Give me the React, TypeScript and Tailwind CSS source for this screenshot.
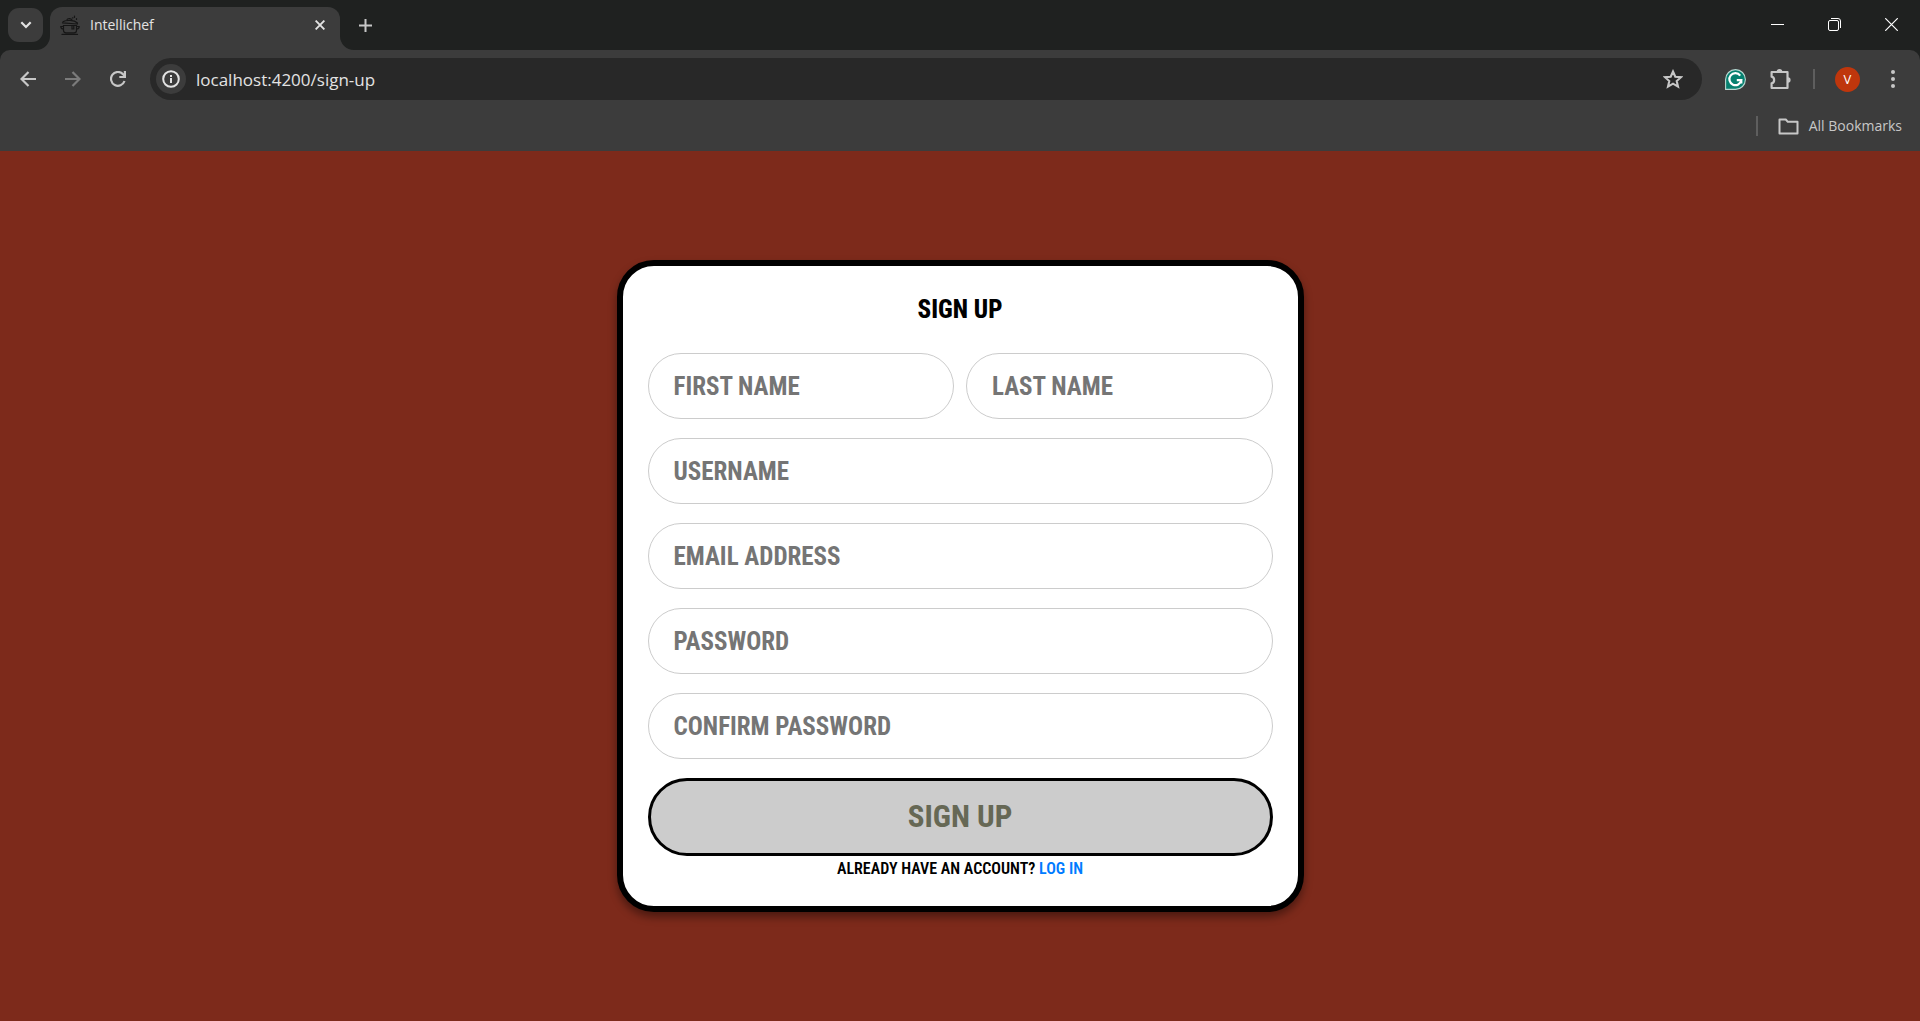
import type { ReactNode } from "react";

const uiFont = "font-['Open_Sans','Noto_Sans',sans-serif]";
const displayFont = "font-['Roboto_Condensed','Liberation_Sans_Narrow',sans-serif]";

function ToolButton({ label, children }: { label: string; children: ReactNode }) {
  return (
    <button type="button" aria-label={label} className="flex size-[35px] shrink-0 items-center justify-center rounded-full text-[#c7c7c7]">
      {children}
    </button>
  );
}

function WindowButton({ label, children }: { label: string; children: ReactNode }) {
  return (
    <button type="button" aria-label={label} className="flex h-[49px] w-[57px] items-center justify-center text-white">
      {children}
    </button>
  );
}

function PotIcon() {
  return (
    <svg viewBox="0 0 20 20" className="size-5 shrink-0" fill="none" stroke="#161616" strokeWidth="1.2" strokeLinecap="round" aria-hidden="true">
      <path d="M2.5 7.8 17.5 9M3 6.8C6 4.6 14 4.8 17.500 8M7 4.600c.5-1.600 5-1.400 5 .5" />
      <path d="M3.5 10.500h13v5c0 1.600-1 2.400-2.400 2.400H6c-1.500 0-2.500-.8-2.500-2.400zM3.500 11.500H.8c0 1.800 1 2.500 2.600 2.500M16.500 11.500h2.700c0 1.800-1 2.500-2.600 2.500M2 19.400h15.500" />
      <path d="M12 10.500v3.500h1.800v-3.500M14.500 1v1.500M16.500 3.500v1M12.500 2.800h.5" />
    </svg>
  );
}

function TabStrip() {
  return (
    <div className="flex h-[50px] items-start bg-[#1f2120]">
      <button type="button" aria-label="Search tabs" className="mt-2 ml-2 flex h-[34px] w-[35px] shrink-0 items-center justify-center rounded-[11px] bg-[#3c3c3c] text-[#e3e3e3]">
        <svg viewBox="0 0 12 8" className="h-2 w-3" fill="none" stroke="currentColor" strokeWidth="2.2" aria-hidden="true">
          <path d="M1.3 1.3 6 6l4.7-4.7" />
        </svg>
      </button>
      <div className="relative mt-[7px] ml-[7px] flex h-[43px] w-[290px] items-center rounded-t-xl bg-[#3c3c3c] pr-[10px] pb-[7px] pl-[10px]">
        <svg viewBox="0 0 14 14" className="absolute bottom-0 -left-[14px] size-[14px]" aria-hidden="true">
          <path d="M14 0v14H0A14 14 0 0 0 14 0z" fill="#3c3c3c" />
        </svg>
        <svg viewBox="0 0 14 14" className="absolute -right-[14px] bottom-0 size-[14px]" aria-hidden="true">
          <path d="M0 0v14h14A14 14 0 0 1 0 0z" fill="#3c3c3c" />
        </svg>
        <PotIcon />
        <span className="ml-[10px] flex-1 text-[14px] leading-5 text-[#e3e3e3]">Intellichef</span>
        <button type="button" aria-label="Close tab" className="flex size-5 items-center justify-center text-[#e3e3e3]">
          <svg viewBox="0 0 10 10" className="size-[10px]" stroke="currentColor" strokeWidth="1.9" aria-hidden="true">
            <path d="M.6.6l8.8 8.8M9.4.6.6 9.4" />
          </svg>
        </button>
      </div>
      <button type="button" aria-label="New tab" className="mt-2 ml-2 flex size-[34px] items-center justify-center text-[#c7c7c7]">
        <svg viewBox="0 0 13 13" className="size-[13px]" stroke="currentColor" strokeWidth="2" aria-hidden="true">
          <path d="M6.5 0v13M0 6.5h13" />
        </svg>
      </button>
      <div className="ml-auto flex">
        <WindowButton label="Minimize">
          <svg viewBox="0 0 13 13" className="size-[13px]" stroke="currentColor" strokeWidth="1" aria-hidden="true">
            <path d="M0 6.5h13" />
          </svg>
        </WindowButton>
        <WindowButton label="Restore">
          <svg viewBox="0 0 13 13" className="size-[13px]" fill="none" stroke="currentColor" aria-hidden="true">
            <rect x=".5" y="2.5" width="10" height="10" rx="1.5" />
            <path d="M3 .5h7a2.500 2.500 0 0 1 2.500 2.500v7" />
          </svg>
        </WindowButton>
        <WindowButton label="Close window">
          <svg viewBox="0 0 13 13" className="size-[13px]" stroke="currentColor" strokeWidth="1.2" aria-hidden="true">
            <path d="M.2.2l12.6 12.6M12.8.2.2 12.8" />
          </svg>
        </WindowButton>
      </div>
    </div>
  );
}

function Toolbar() {
  return (
    <div className="flex h-[58px] items-center px-[10px]">
      <div className="flex gap-[10px]">
        <ToolButton label="Back">
          <svg viewBox="0 0 16 16" className="size-4" fill="none" stroke="currentColor" strokeWidth="2.2" aria-hidden="true">
            <path d="M16 8H2M8.500 1 1.500 8l7 7" />
          </svg>
        </ToolButton>
        <button type="button" disabled aria-label="Forward" className="flex size-[35px] items-center justify-center text-[#7b7b7b]">
          <svg viewBox="0 0 16 16" className="size-4" fill="none" stroke="currentColor" strokeWidth="2.2" aria-hidden="true">
            <path d="M0 8h14M7.500 1l7 7-7 7" />
          </svg>
        </button>
        <ToolButton label="Reload">
          <svg viewBox="0 0 16 16" className="size-4" fill="none" stroke="currentColor" strokeWidth="2.2" aria-hidden="true">
            <path d="M14.500 10A6.900 6.900 0 1 1 13 3.200L15 5.200M14.900 0v6H9.300" />
          </svg>
        </ToolButton>
      </div>
      <div className="ml-[15px] flex h-[42px] flex-1 items-center rounded-full bg-[#282828] pr-3 pl-[6px]">
        <button type="button" aria-label="View site information" className="flex size-[30px] items-center justify-center rounded-full bg-[#3c3c3c] text-[#e3e3e3]">
          <svg viewBox="0 0 18 18" className="size-[18px]" fill="none" stroke="currentColor" strokeWidth="2" aria-hidden="true">
            <circle cx="9" cy="9" r="7.800" />
            <path d="M9 8v5M9 5v1.900" />
          </svg>
        </button>
        <input aria-label="Address" type="text" defaultValue="localhost:4200/sign-up" className="ml-[10px] h-8 min-w-0 flex-1 bg-transparent text-[17px] leading-6 text-[#e3e3e3] outline-none" />
        <button type="button" aria-label="Bookmark this tab" className="flex size-[35px] items-center justify-center text-[#c7c7c7]">
          <svg viewBox="0 0 20 20" className="size-5" fill="none" stroke="currentColor" strokeWidth="2.1" aria-hidden="true">
            <path d="M10 2.500l2.300 5.200 5.700.5-4.300 3.800 1.300 5.600-5-3-5 3 1.300-5.600L2 8.200l5.700-.5z" />
          </svg>
        </button>
      </div>
      <div className="ml-4 flex items-center gap-[10px]">
        <ToolButton label="Grammarly">
          <svg viewBox="0 0 21 21" className="size-[21px]" fill="none" aria-hidden="true">
            <path d="M.6 20.400V10.500a9.900 9.900 0 1 1 9.900 9.900z" fill="#06806f" stroke="#b9d8d2" strokeWidth="1.1" />
            <path d="M15.200 6.600a6 6 0 1 0 1.100 4.500h-4.500M16.300 14.600v-3.500" stroke="#fff" strokeWidth="2.2" />
          </svg>
        </ToolButton>
        <ToolButton label="Extensions">
          <svg viewBox="0 0 21 21" className="size-[21px]" fill="none" stroke="currentColor" strokeWidth="2.2" strokeLinejoin="round" aria-hidden="true">
            <path d="M1.600 3h15.900v16H1.600v-4.700c3.400-.6 3.400-6 0-6.600z" />
            <path d="M6.700 2.600a2.800 2.600 0 0 1 5.600 0zM18 8.200a2.600 2.800 0 0 1 0 5.600z" fill="currentColor" stroke="none" />
          </svg>
        </ToolButton>
      </div>
      <div className="mx-[15px] h-5 w-[2px] bg-[#5e5e5e]" />
      <button type="button" aria-label="Profile V" className="mr-[10px] flex size-[35px] items-center justify-center">
        <span className="flex size-[25px] items-center justify-center rounded-full bg-[#bf360c] text-[13px] leading-4 text-white">V</span>
      </button>
      <ToolButton label="Menu">
        <svg viewBox="0 0 4 18" className="h-[18px] w-1" fill="currentColor" aria-hidden="true">
          <circle cx="2" cy="2" r="2" />
          <circle cx="2" cy="9" r="2" />
          <circle cx="2" cy="16" r="2" />
        </svg>
      </ToolButton>
    </div>
  );
}

function BookmarksBar() {
  return (
    <div className="flex h-[43px] items-center justify-end gap-5 pr-[18px] pb-[7px]">
      <div className="h-5 w-[2px] bg-[#5e5e5e]" />
      <button type="button" className="flex items-center gap-[10px] text-[#c7c7c7]">
        <svg viewBox="0 0 21 17" className="h-[17px] w-[21px]" fill="none" stroke="currentColor" strokeWidth="2" strokeLinejoin="round" aria-hidden="true">
          <path d="M1.500 1.500h6.300l2 2.300h9.700v11.700h-18z" />
        </svg>
        <span className="text-[14px] leading-5">All Bookmarks</span>
      </button>
    </div>
  );
}

function Field({ label, type = "text", name }: { label: string; type?: string; name: string }) {
  return (
    <input
      type={type}
      name={name}
      aria-label={label}
      placeholder={label}
      className="h-[66px] w-full min-w-0 rounded-full border border-[#ccc] bg-white px-[25px] text-[25px] font-bold uppercase outline-none placeholder:text-[#757575]"
    />
  );
}

function SignUpForm() {
  return (
    <form className={`${displayFont} w-full max-w-[687px] rounded-[37px] border-6 border-black bg-white p-[25px] shadow-[0_5px_8px_rgba(0,0,0,0.4)]`}>
      <h1 className="mb-[25px] text-center text-[25px] leading-[37px] font-extrabold text-black uppercase">Sign Up</h1>
      <div className="flex flex-col gap-[19px]">
        <div className="grid grid-cols-2 gap-3">
          <Field label="First Name" name="firstName" />
          <Field label="Last Name" name="lastName" />
        </div>
        <Field label="Username" name="username" />
        <Field label="Email Address" name="email" type="email" />
        <Field label="Password" name="password" type="password" />
        <Field label="Confirm Password" name="confirmPassword" type="password" />
        <button type="submit" disabled className="h-[78px] rounded-full border-3 border-black bg-[#ccc] text-[31px] font-bold text-[#666855] uppercase">
          Sign Up
        </button>
      </div>
      <p className="text-center text-[16px] leading-[25px] font-semibold text-black uppercase">
        Already have an account?{" "}
        <a href="#login" className="text-[#007bff]">Log in</a>
      </p>
    </form>
  );
}

export default function App() {
  return (
    <div className={`${uiFont} flex min-h-screen flex-col bg-[#7d2a1b]`}>
      <header className="bg-[#1f2120]">
        <TabStrip />
        <div className="rounded-t-[10px] bg-[#3c3c3c]">
          <Toolbar />
          <BookmarksBar />
        </div>
      </header>
      <main className="flex flex-1 items-center justify-center">
        <SignUpForm />
      </main>
    </div>
  );
}
